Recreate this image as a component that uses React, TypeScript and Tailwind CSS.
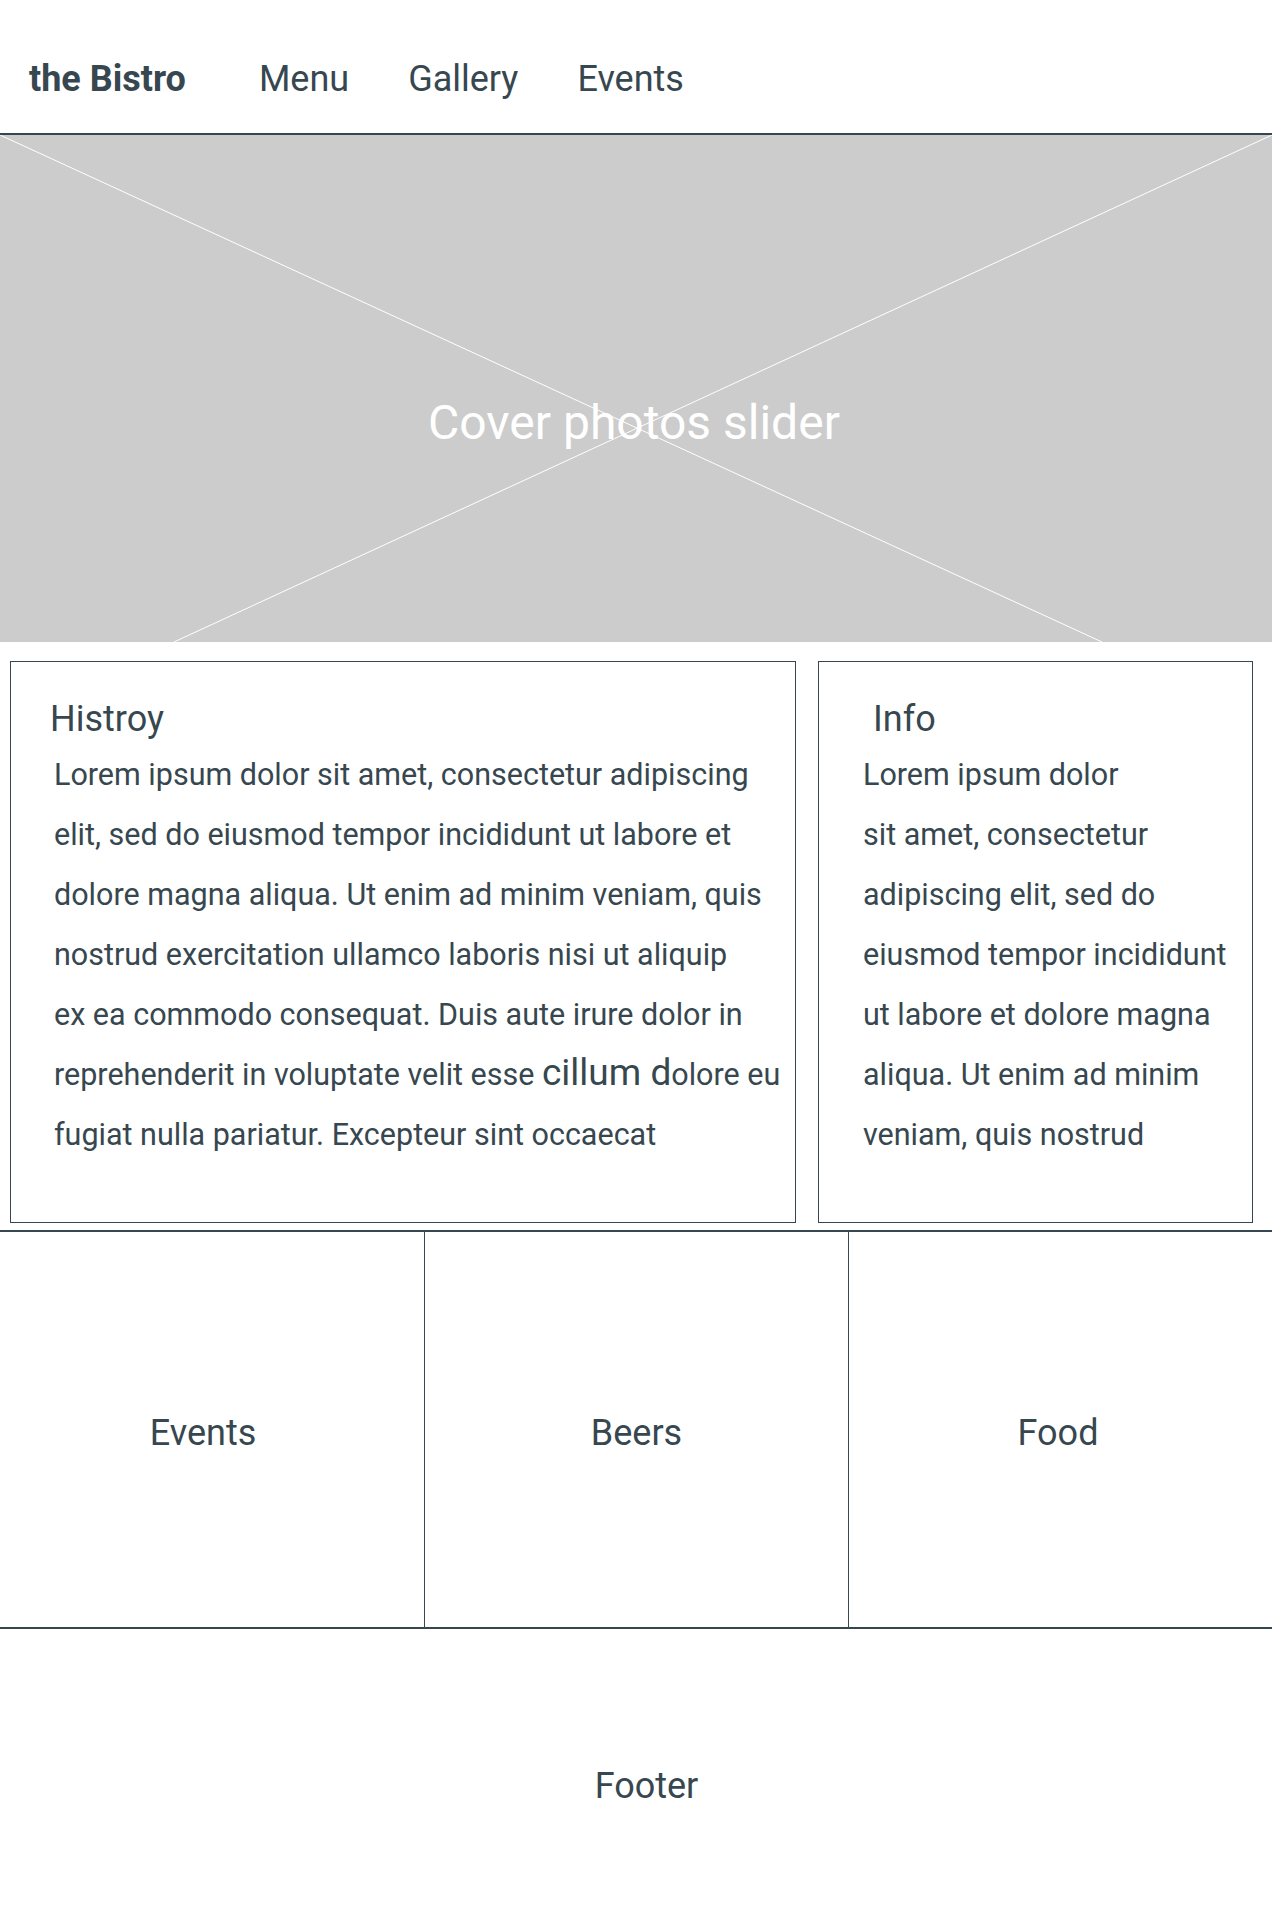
import React from 'react';

const historyLines = [
  'Lorem ipsum dolor sit amet, consectetur adipiscing',
  'elit, sed do eiusmod tempor incididunt ut labore et',
  'dolore magna aliqua. Ut enim ad minim veniam, quis',
  'nostrud exercitation ullamco laboris nisi ut aliquip',
  'ex ea commodo consequat. Duis aute irure dolor in',
];

const infoLines = [
  'Lorem ipsum dolor',
  'sit amet, consectetur',
  'adipiscing elit, sed do',
  'eiusmod tempor incididunt',
  'ut labore et dolore magna',
  'aliqua. Ut enim ad minim',
  'veniam, quis nostrud',
];

export default function App() {
  return (
    <div className="min-h-screen bg-white text-[#37474f] font-['Roboto','Liberation_Sans',sans-serif]">
      {/* Nav */}
      <nav className="flex h-[135px] items-center border-b-2 border-[#37474f] pl-[29px] pt-[24px] text-[36px]">
        <span className="mr-[73px] font-bold">the Bistro</span>
        <div className="flex gap-[59px]">
          <a>Menu</a>
          <a>Gallery</a>
          <a>Events</a>
        </div>
      </nav>

      {/* Cover */}
      <section className="relative flex h-[507px] items-center justify-center bg-[#cccccc] pt-[68px]">
        <svg
          className="absolute inset-0 h-full w-full"
          viewBox="0 0 1272 507"
          preserveAspectRatio="none"
        >
          <line x1="0" y1="0" x2="1102" y2="507" stroke="#ffffff" strokeWidth="1" />
          <line x1="1272" y1="0" x2="174" y2="507" stroke="#ffffff" strokeWidth="1" />
        </svg>
        <h1 className="relative pr-[4px] text-[48px] leading-none text-white">Cover photos slider</h1>
      </section>

      {/* History + Info */}
      <section className="flex gap-[22px] pl-[10px] pr-[19px] pt-[19px]">
        <div className="h-[562px] w-[786px] border border-[#37474f] pl-[39px] pt-[35px]">
          <h2 className="text-[36px] leading-[44px]">Histroy</h2>
          <div className="mt-[4px] pl-[4px] text-[30.5px] leading-[60px]">
            {historyLines.map((l) => (
              <p key={l}>{l}</p>
            ))}
            <p>
              reprehenderit in voluptate velit esse <span className="text-[37px] leading-none">cillum d</span>olore eu
            </p>
            <p>fugiat nulla pariatur. Excepteur sint occaecat</p>
          </div>
        </div>
        <div className="h-[562px] flex-1 border border-[#37474f] pl-[44px] pt-[35px]">
          <h2 className="pl-[10px] text-[36px] leading-[44px]">Info</h2>
          <div className="mt-[4px] text-[30.5px] leading-[60px]">
            {infoLines.map((l) => (
              <p key={l}>{l}</p>
            ))}
          </div>
        </div>
      </section>

      {/* Categories */}
      <section className="mt-[7px] grid h-[399px] grid-cols-3 border-y-2 border-[#37474f] text-[36px]">
        <div className="flex items-center justify-center pr-[18px] pt-[7px]">Events</div>
        <div className="flex items-center justify-center border-l border-[#37474f] pt-[7px]">Beers</div>
        <div className="flex items-center justify-center border-l border-[#37474f] pr-[5px] pt-[7px]">Food</div>
      </section>

      {/* Footer */}
      <footer className="flex h-[312px] items-center justify-center pl-[21px] pt-[2px] text-[36px]">Footer</footer>
    </div>
  );
}
